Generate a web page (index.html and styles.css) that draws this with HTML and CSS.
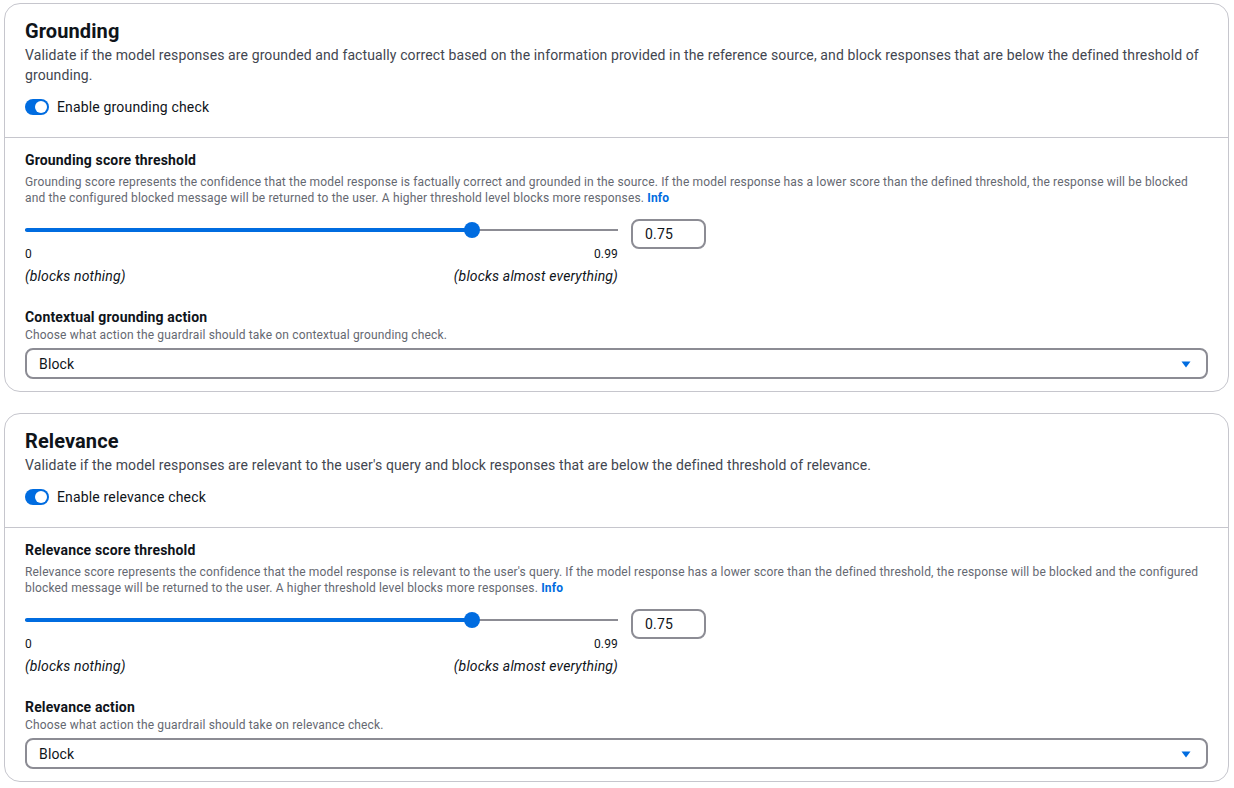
FILE: index.html
```html
<!DOCTYPE html>
<html lang="en">
<head>
<meta charset="utf-8">
<title>Guardrail checks</title>
<link rel="stylesheet" href="styles.css">
</head>
<body>
<div class="page">
  <section class="card">
    <div class="card-head">
      <h2 class="title">Grounding</h2>
      <p class="desc">Validate if the model responses are grounded and factually correct based on the information provided in the reference source, and block responses that are below the defined threshold of grounding.</p>
      <label class="toggle-row">
        <span class="toggle"><span class="knob"></span></span>
        <span>Enable grounding check</span>
      </label>
    </div>
    <div class="card-body">
      <div class="field">
        <div class="label">Grounding score threshold</div>
        <div class="hint">Grounding score represents the confidence that the model response is factually correct and grounded in the source. If the model response has a lower score than the defined threshold, the response will be blocked and the configured blocked message will be returned to the user. A higher threshold level blocks more responses. <a class="info">Info</a></div>
        <div class="slider-row">
          <div class="slider-col">
            <div class="slider">
              <div class="track"></div>
              <div class="fill" style="width: 75.7%"></div>
              <div class="thumb" style="left: 75.7%"></div>
            </div>
            <div class="ticks"><span>0</span><span>0.99</span></div>
            <div class="ends"><span>(blocks nothing)</span><span>(blocks almost everything)</span></div>
          </div>
          <div class="num">0.75</div>
        </div>
      </div>
      <div class="field">
        <div class="label">Contextual grounding action</div>
        <div class="hint hint-tight">Choose what action the guardrail should take on contextual grounding check.</div>
        <div class="select">
          <span>Block</span>
          <svg class="caret" width="12" height="12" viewBox="0 0 12 12"><path d="M1.5 3.5 L10.5 3.5 L6 9.5 Z" fill="#006ce0"/></svg>
        </div>
      </div>
    </div>
  </section>

  <section class="card">
    <div class="card-head">
      <h2 class="title">Relevance</h2>
      <p class="desc">Validate if the model responses are relevant to the user's query and block responses that are below the defined threshold of relevance.</p>
      <label class="toggle-row">
        <span class="toggle"><span class="knob"></span></span>
        <span>Enable relevance check</span>
      </label>
    </div>
    <div class="card-body">
      <div class="field">
        <div class="label">Relevance score threshold</div>
        <div class="hint">Relevance score represents the confidence that the model response is relevant to the user's query. If the model response has a lower score than the defined threshold, the response will be blocked and the configured blocked message will be returned to the user. A higher threshold level blocks more responses. <a class="info">Info</a></div>
        <div class="slider-row">
          <div class="slider-col">
            <div class="slider">
              <div class="track"></div>
              <div class="fill" style="width: 75.7%"></div>
              <div class="thumb" style="left: 75.7%"></div>
            </div>
            <div class="ticks"><span>0</span><span>0.99</span></div>
            <div class="ends"><span>(blocks nothing)</span><span>(blocks almost everything)</span></div>
          </div>
          <div class="num">0.75</div>
        </div>
      </div>
      <div class="field">
        <div class="label">Relevance action</div>
        <div class="hint hint-tight">Choose what action the guardrail should take on relevance check.</div>
        <div class="select">
          <span>Block</span>
          <svg class="caret" width="12" height="12" viewBox="0 0 12 12"><path d="M1.5 3.5 L10.5 3.5 L6 9.5 Z" fill="#006ce0"/></svg>
        </div>
      </div>
    </div>
  </section>
</div>
</body>
</html>
```

FILE: styles.css
```css
* { box-sizing: border-box; }
html, body { margin: 0; padding: 0; background: #ffffff; }
body {
  font-family: Roboto, "Open Sans", sans-serif;
  color: #0f141a;
  font-size: 14px;
  line-height: 20px;
  letter-spacing: 0.16px;
}
.page {
  padding: 3px 5px 0 4px;
  display: flex;
  flex-direction: column;
  gap: 21px;
}
.card {
  border: 1px solid #c6c6cd;
  border-radius: 16px;
  background: #fff;
}
.card-head {
  padding: 15px 20px 20px 20px;
  border-bottom: 1px solid #c6c6cd;
}
.title {
  margin: 0;
  font-size: 20px;
  line-height: 24px;
  font-weight: 700;
  letter-spacing: 0.1px;
}
.desc {
  margin: 2px 0 0;
  font-size: 14px;
  line-height: 20px;
  color: #424650;
  letter-spacing: 0.11px;
}
.toggle-row {
  margin-top: 12px;
  display: flex;
  align-items: center;
  gap: 8px;
}
.toggle {
  width: 24px;
  height: 16px;
  border-radius: 8px;
  background: #006ce0;
  position: relative;
  flex: none;
}
.knob {
  position: absolute;
  width: 12px;
  height: 12px;
  border-radius: 50%;
  background: #fff;
  top: 2px;
  right: 2px;
}
.card-body {
  padding: 12px 20px 12px 20px;
  display: flex;
  flex-direction: column;
  gap: 21px;
}
.label {
  font-weight: 700;
  font-size: 14px;
  line-height: 20px;
}
.hint {
  margin-top: 4px;
  font-size: 12px;
  line-height: 16px;
  color: #656871;
}
.hint-tight { margin-top: 0; }
.info {
  color: #006ce0;
  font-weight: 700;
}
.slider-row {
  margin-top: 13px;
  display: flex;
  align-items: flex-start;
  gap: 13px;
}
.slider-col {
  width: 593px;
}
.slider {
  position: relative;
  height: 16px;
  margin-top: 3px;
}
.track {
  position: absolute;
  left: 0; right: 0;
  top: 7px;
  height: 2px;
  background: #8c8c94;
}
.fill {
  position: absolute;
  left: 0;
  top: 6px;
  height: 4px;
  border-radius: 2px;
  background: #006ce0;
}
.thumb {
  position: absolute;
  top: 0;
  width: 16px;
  height: 16px;
  margin-left: -10px;
  border-radius: 50%;
  background: #006ce0;
}
.ticks, .ends {
  display: flex;
  justify-content: space-between;
}
.ticks {
  margin-top: 8px;
  font-size: 12px;
  line-height: 16px;
}
.ends {
  margin-top: 4px;
  font-style: italic;
}
.num {
  width: 75px;
  height: 30px;
  border: 2px solid #8c8c94;
  border-radius: 8px;
  padding: 0 12px;
  display: flex;
  align-items: center;
  font-size: 14px;
}
.select {
  margin-top: 5px;
  height: 31px;
  border: 2px solid #8c8c94;
  border-radius: 8px;
  padding: 0 14px 0 12px;
  display: flex;
  align-items: center;
  justify-content: space-between;
}
.caret { display: block; }
```
